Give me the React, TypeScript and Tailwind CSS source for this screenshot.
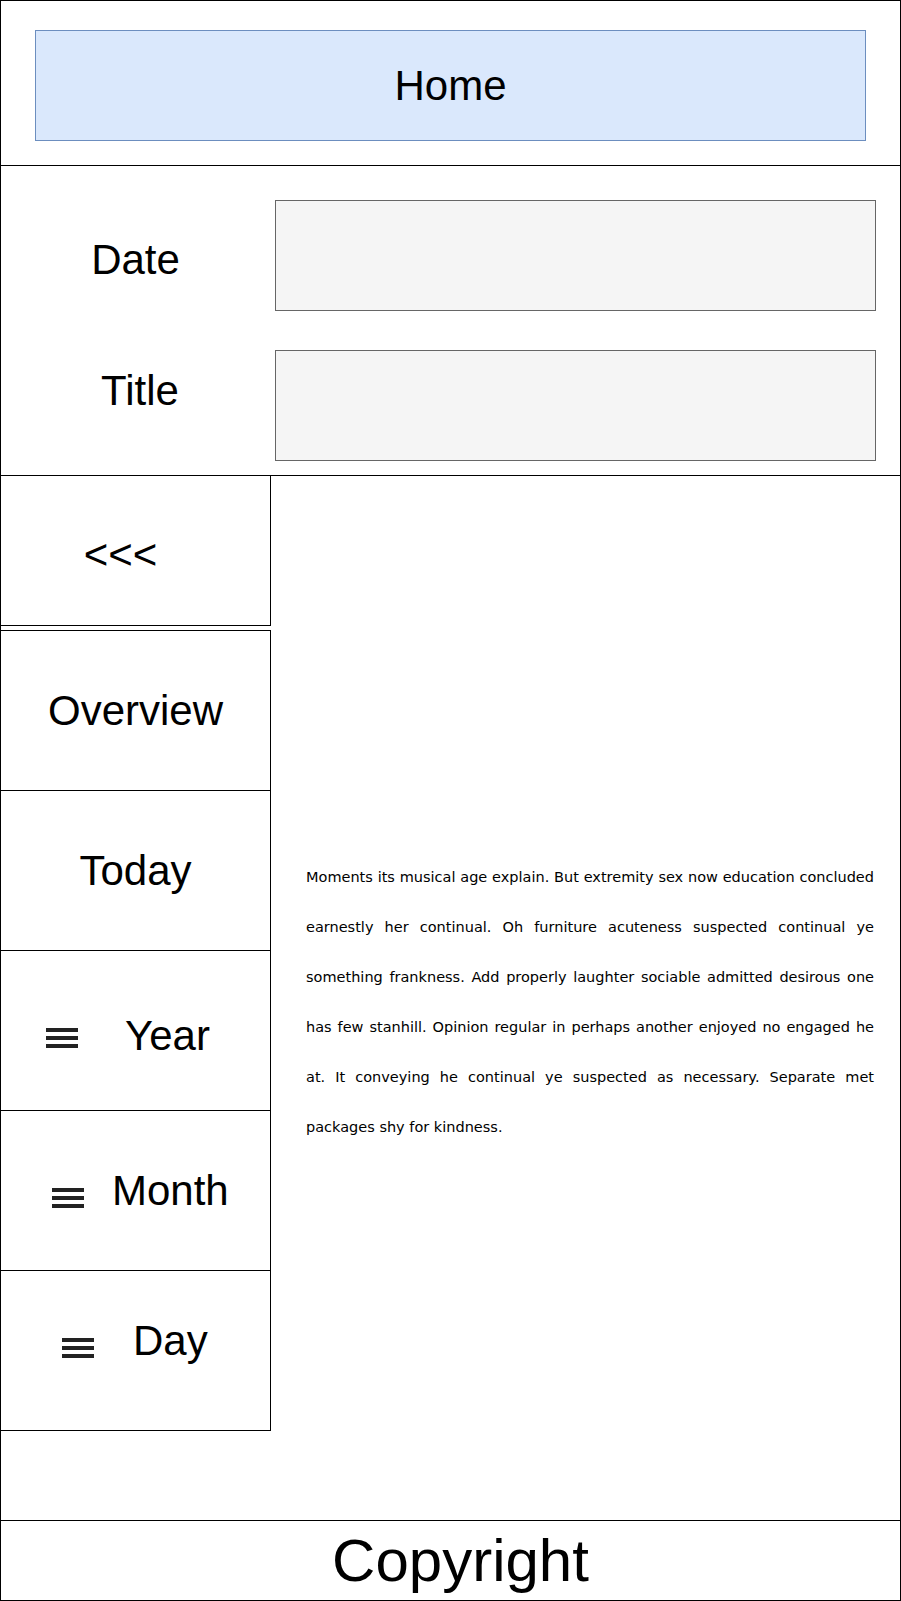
import React from "react";

const Burger = () => (
  <svg width="32" height="20" viewBox="0 0 32 20" className="shrink-0 block">
    <rect x="0" y="0" width="32" height="4" fill="#222222" />
    <rect x="0" y="8" width="32" height="4" fill="#222222" />
    <rect x="0" y="16" width="32" height="4" fill="#222222" />
  </svg>
);

const lines = [
  "Moments its musical age explain. But extremity sex now education concluded",
  "earnestly her continual. Oh furniture acuteness suspected continual ye",
  "something frankness. Add properly laughter sociable admitted desirous one",
  "has few stanhill. Opinion regular in perhaps another enjoyed no engaged he",
  "at. It conveying he continual ye suspected as necessary. Separate met",
];

export default function App() {
  return (
    <div className="w-[901px] h-[1601px] border border-black flex flex-col bg-white text-black font-['Liberation_Sans',Arial,sans-serif]">
      {/* Header */}
      <div className="h-[165px] shrink-0 border-b border-black pt-[29px] pl-[34px]">
        <div className="w-[831px] h-[111px] border border-[#6c8ebf] bg-[#dae8fc] flex items-center justify-center">
          <span className="text-[42px] leading-none">Home</span>
        </div>
      </div>

      {/* Date / Title */}
      <div className="h-[310px] shrink-0 border-b border-black pt-[34px] flex flex-col gap-[39px]">
        <div className="flex h-[111px]">
          <div className="w-[274px] flex items-center justify-center">
            <span className="text-[42px] leading-none mt-[9px] mr-[5px]">Date</span>
          </div>
          <div className="w-[601px] h-[111px] border border-[#666666] bg-[#f5f5f5]" />
        </div>
        <div className="flex h-[111px]">
          <div className="w-[274px] flex items-center justify-center">
            <span className="text-[42px] leading-none mb-[30px] ml-[4px]">Title</span>
          </div>
          <div className="w-[601px] h-[111px] border border-[#666666] bg-[#f5f5f5]" />
        </div>
      </div>

      {/* Main */}
      <div className="h-[1045px] shrink-0 border-b border-black flex">
        <div className="w-[270px] shrink-0 flex flex-col">
          <div className="h-[150px] border-b border-r border-black flex items-center justify-center pr-[30px]">
            <span className="text-[42px] leading-none mt-[8px]">&lt;&lt;&lt;</span>
          </div>
          <div className="mt-[4px] border-t border-r border-black flex flex-col">
            <div className="h-[160px] border-b border-black flex items-center justify-center">
              <span className="text-[42px] leading-none">Overview</span>
            </div>
            <div className="h-[160px] border-b border-black flex items-center justify-center">
              <span className="text-[42px] leading-none">Today</span>
            </div>
            <div className="h-[160px] border-b border-black flex items-center pl-[45px]">
              <div className="mt-[15px]">
                <Burger />
              </div>
              <span className="text-[42px] leading-none ml-[47px] mt-[10px]">Year</span>
            </div>
            <div className="h-[160px] border-b border-black flex items-center pl-[51px]">
              <div className="mt-[14px]">
                <Burger />
              </div>
              <span className="text-[42px] leading-none ml-[28px]">Month</span>
            </div>
            <div className="h-[160px] border-b border-black flex items-center pl-[61px]">
              <div className="mb-[6px]">
                <Burger />
              </div>
              <span className="text-[42px] leading-none ml-[39px] mb-[20px]">Day</span>
            </div>
          </div>
        </div>
        <div className="flex-1 pl-[35px] pr-[26px] pt-[376px] font-['DejaVu_Sans',Verdana,sans-serif] text-[14.5px]">
          {lines.map((l) => (
            <div key={l} className="h-[50px] leading-[50px] whitespace-nowrap text-justify [text-align-last:justify]">
              {l}
            </div>
          ))}
          <div className="h-[50px] leading-[50px]">packages shy for kindness.</div>
        </div>
      </div>

      {/* Footer */}
      <div className="flex-1 flex items-center justify-center pl-[20px]">
        <span className="text-[60px] leading-none">Copyright</span>
      </div>
    </div>
  );
}
